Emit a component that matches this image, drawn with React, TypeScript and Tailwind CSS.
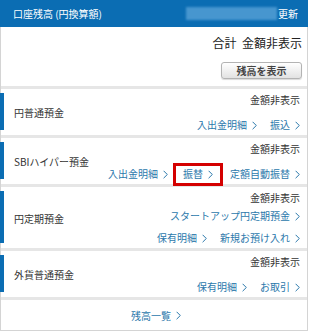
import React from "react";

const font = { fontFamily: '"Noto Sans CJK JP", "Noto Sans", sans-serif' };

function Chevron() {
  return (
    <svg width="5" height="9" viewBox="0 0 5 9" className="ml-[5px] inline-block" fill="none" stroke="currentColor" strokeWidth={1}>
      <path d="M0.6 0.8 L4.3 4.5 L0.6 8.2" />
    </svg>
  );
}

function LinkText({ label }: { label: string }) {
  return (
    <span className="text-[#2b78ab] whitespace-nowrap inline-flex items-center">
      {label}
      <Chevron />
    </span>
  );
}

function Separator() {
  return <div className="h-[3px] bg-[#e6e6e6]" />;
}

type Account = {
  title: string;
  rows: React.ReactNode[];
  gaps: string[];
};

function AccountRow({ title, rows, gaps }: Account) {
  return (
    <div className="flex">
      {/* blue side marker */}
      <div className="w-[4px] -ml-px mt-[4px] mb-[5px] bg-[#0b6db3]" />
      <div className="flex flex-1 items-center pl-[10px] pr-[7px] pt-[4px] pb-[3px]">
        <div className="flex-1 text-[10px] text-[#333]">{title}</div>
        <div className="flex flex-col items-end text-[10px] leading-[14px]">
          <div className="text-[#333]">金額非表示</div>
          {rows.map((r, i) => (
            <div key={i} className={`flex items-center gap-[13px] ${gaps[i]}`}>
              {r}
            </div>
          ))}
        </div>
      </div>
    </div>
  );
}

export default function App() {
  return (
    <div className="w-[310px] h-[336px] bg-white" style={font}>
      <div className="w-[308px]">
        {/* header */}
        <div className="h-[27px] bg-[#0b6db3] flex items-center pl-[13px] pr-[10px] text-white text-[10px]">
          <span className="flex-1">口座残高 (円換算額)</span>
          <div className="w-[91px] h-[13px] bg-[#4796cf] blur-[1px]" />
          <span className="ml-[1px]">更新</span>
        </div>

        <div className="border-l border-r border-b border-[#d4d4d4]">
          {/* total */}
          <div className="flex flex-col items-end pr-[5px] pt-[8px] pb-[7px]">
            <div className="text-[12px] leading-[16px] text-[#222]">合計&nbsp;&nbsp;金額非表示</div>
            <button className="mt-[11px] w-[81px] h-[17px] rounded-[3px] border border-[#b3b3b3] bg-gradient-to-b from-white to-[#e2e2e2] text-[10px] font-bold text-[#444] leading-none shadow-[0_1px_1px_rgba(0,0,0,0.15)]">
              残高を表示
            </button>
          </div>

          <Separator />
          <AccountRow
            title="円普通預金"
            gaps={["mt-[11px]"]}
            rows={[[<LinkText key="a" label="入出金明細" />, <LinkText key="b" label="振込" />]]}
          />
          <Separator />
          <AccountRow
            title="SBIハイパー預金"
            gaps={["mt-[11px] !gap-[5px]"]}
            rows={[
              [
                <LinkText key="a" label="入出金明細" />,
                <span key="b" className="border-[3px] border-[#d40000] px-[7px] h-[23px] -my-[5px] flex items-center">
                  <LinkText label="振替" />
                </span>,
                <span key="c" className="ml-[2px]">
                  <LinkText label="定額自動振替" />
                </span>,
              ],
            ]}
          />
          <Separator />
          <AccountRow
            title="円定期預金"
            gaps={["mt-[4px]", "mt-[8px]"]}
            rows={[
              [<LinkText key="a" label="スタートアップ円定期預金" />],
              [<LinkText key="a" label="保有明細" />, <LinkText key="b" label="新規お預け入れ" />],
            ]}
          />
          <Separator />
          <AccountRow
            title="外貨普通預金"
            gaps={["mt-[11px]"]}
            rows={[[<LinkText key="a" label="保有明細" />, <LinkText key="b" label="お取引" />]]}
          />
          <Separator />

          {/* footer link */}
          <div className="h-[30px] flex items-center justify-center text-[10px] pl-[4px]">
            <LinkText label="残高一覧" />
          </div>
        </div>
      </div>
    </div>
  );
}
